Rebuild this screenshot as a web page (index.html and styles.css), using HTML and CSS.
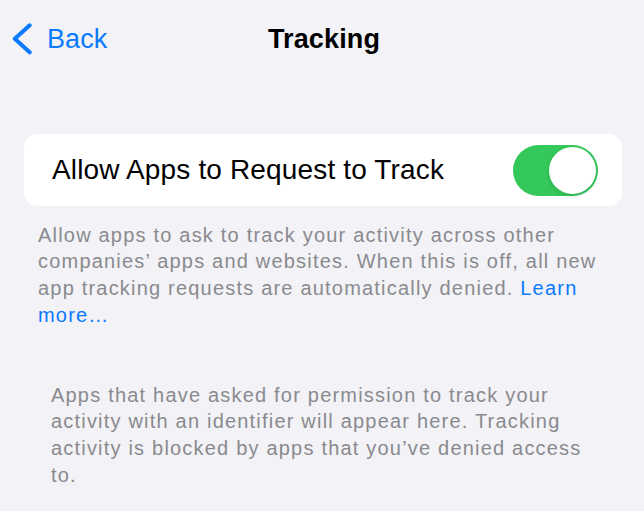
FILE: index.html
```html
<!DOCTYPE html>
<html lang="en">
<head>
<meta charset="utf-8">
<title>Tracking</title>
<link rel="stylesheet" href="styles.css">
</head>
<body>
<div class="screen">
  <header class="nav">
    <a class="back" href="#">
      <svg class="chevron" width="22" height="34" viewBox="0 0 22 34" aria-hidden="true">
        <polyline points="17.7,3.3 2.8,16.8 17.7,30.3" fill="none" stroke="#0a7aff" stroke-width="4" stroke-linecap="round" stroke-linejoin="round"/>
      </svg>
      <span class="back-label">Back</span>
    </a>
    <h1 class="title">Tracking</h1>
    <span class="spacer"></span>
  </header>

  <section class="group">
    <div class="cell">
      <span class="cell-label">Allow Apps to Request to Track</span>
      <span class="switch on"><span class="knob"></span></span>
    </div>
  </section>
  <p class="footer">Allow apps to ask to track your activity across other companies’ apps and websites. When this is off, all new app tracking requests are automatically denied. <a class="link" href="#">Learn more…</a></p>

  <p class="empty-note">Apps that have asked for permission to track your activity with an identifier will appear here. Tracking activity is blocked by apps that you’ve denied access to.</p>
</div>
</body>
</html>
```

FILE: styles.css
```css
html, body {
  margin: 0;
  padding: 0;
  background: #f2f2f7;
}

body {
  font-family: "Liberation Sans", Arial, sans-serif;
  -webkit-font-smoothing: antialiased;
}

.screen {
  width: 644px;
  height: 511px;
  overflow: hidden;
}

.nav {
  display: grid;
  grid-template-columns: 1fr auto 1fr;
  align-items: center;
  padding: 21px 12px 0 12px;
  height: 134px;
  box-sizing: border-box;
  align-content: start;
}

.back {
  display: flex;
  align-items: center;
  gap: 13px;
  color: #0a7aff;
  text-decoration: none;
  font-size: 27px;
  line-height: 36px;
  height: 36px;
  justify-self: start;
}

.chevron {
  display: block;
  flex: none;
}

.back-label {
  letter-spacing: 0.1px;
}

.title {
  margin: 0;
  font-size: 27px;
  font-weight: 700;
  color: #000;
  line-height: 36px;
  letter-spacing: 0.15px;
  transform: translateX(2px);
}

.group {
  margin: 0 22px 0 24px;
  background: #fff;
  border-radius: 13px;
}

.cell {
  height: 72px;
  display: flex;
  align-items: center;
  justify-content: space-between;
  padding: 0 24px 0 28px;
}

.cell-label {
  font-size: 28px;
  color: #000;
  letter-spacing: 0.15px;
}

.switch {
  width: 85px;
  height: 51px;
  border-radius: 26px;
  background: #34c759;
  display: flex;
  align-items: center;
  justify-content: flex-end;
  padding: 2px;
  box-sizing: border-box;
}

.knob {
  width: 47px;
  height: 47px;
  border-radius: 50%;
  background: #fff;
  box-shadow: 0 2px 4px rgba(0, 0, 0, 0.12);
}

.footer {
  margin: 15.5px 38px 0 38px;
  font-size: 20px;
  line-height: 26.7px;
  letter-spacing: 1.2px;
  color: #8a8a8e;
}

.link {
  color: #0a7aff;
  text-decoration: none;
}

.empty-note {
  margin: 53.5px 44px 0 51px;
  font-size: 20px;
  line-height: 26.6px;
  letter-spacing: 1.2px;
  color: #8a8a8e;
}
```
